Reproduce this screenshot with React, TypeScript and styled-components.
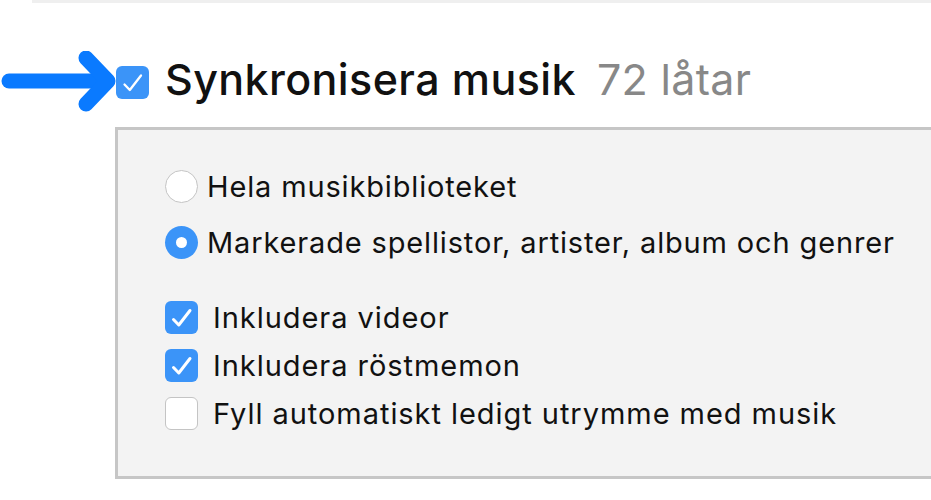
import React from 'react';
import styled, { createGlobalStyle } from 'styled-components';

const GlobalStyle = createGlobalStyle`
  html, body {
    margin: 0;
    padding: 0;
    background: #ffffff;
    font-family: Inter, "Liberation Sans", Arial, sans-serif;
    overflow: hidden;
  }
`;

const CheckMark: React.FC<{ weight: number }> = ({ weight }) => (
  <svg width="33" height="33" viewBox="0 0 33 33" fill="none">
    <path
      d="M8.5 18.5 L13.8 24 L25 9.5"
      stroke="#ffffff"
      strokeWidth={weight}
      strokeLinecap="round"
      strokeLinejoin="round"
    />
  </svg>
);

const Arrow: React.FC = () => (
  <svg width="116" height="62" viewBox="0 0 116 62" fill="none">
    <path d="M9 30 H106" stroke="#0a7aff" strokeWidth="15" strokeLinecap="round" />
    <path
      d="M86 7 L108 30 L86 53"
      stroke="#0a7aff"
      strokeWidth="15"
      strokeLinecap="round"
      strokeLinejoin="round"
    />
  </svg>
);

const App: React.FC = () => {
  return (
    <>
      <GlobalStyle />
      <Page>
        <TopRule />
        <TitleRow>
          <ArrowSlot>
            <Arrow />
          </ArrowSlot>
          <Box $checked>
            <CheckMark weight={2.3} />
          </Box>
          <Title>Synkronisera musik</Title>
          <Count>72 låtar</Count>
        </TitleRow>
        <Panel>
          <RadioGroup>
            <Option>
              <Radio />
              <Label>Hela musikbiblioteket</Label>
            </Option>
            <Option>
              <Radio $selected />
              <Label>Markerade spellistor, artister, album och genrer</Label>
            </Option>
          </RadioGroup>
          <CheckGroup>
            <Option>
              <Box $checked>
                <CheckMark weight={3} />
              </Box>
              <CheckLabel>Inkludera videor</CheckLabel>
            </Option>
            <Option>
              <Box $checked>
                <CheckMark weight={3} />
              </Box>
              <CheckLabel>Inkludera röstmemon</CheckLabel>
            </Option>
            <Option>
              <Box />
              <CheckLabel>Fyll automatiskt ledigt utrymme med musik</CheckLabel>
            </Option>
          </CheckGroup>
        </Panel>
      </Page>
    </>
  );
};

const Page = styled.div`
  width: 931px;
  height: 500px;
  display: flex;
  flex-direction: column;
`;

const TopRule = styled.div`
  margin-left: 32px;
  height: 3px;
  background: #efefef;
`;

const TitleRow = styled.div`
  display: flex;
  align-items: center;
  margin-top: 48px;
  height: 62px;
`;

const ArrowSlot = styled.div`
  width: 116px;
  height: 62px;
  flex-shrink: 0;
`;

const Box = styled.div<{ $checked?: boolean }>`
  width: 33px;
  height: 33px;
  box-sizing: border-box;
  border-radius: 6px;
  flex-shrink: 0;
  display: flex;
  align-items: center;
  justify-content: center;
  background: ${(p) => (p.$checked ? '#3b94f8' : '#ffffff')};
  border: ${(p) => (p.$checked ? 'none' : '1.5px solid #c4c4c4')};
`;

const Title = styled.span`
  margin-left: 16px;
  margin-bottom: 6px;
  font-size: 43px;
  font-weight: 500;
  color: #111111;
  letter-spacing: 0.4px;
`;

const Count = styled.span`
  margin-left: 21px;
  margin-bottom: 6px;
  font-size: 43px;
  font-weight: 400;
  color: #888888;
  letter-spacing: 0.3px;
`;

const Panel = styled.div`
  margin-top: 14px;
  margin-left: 115px;
  height: 352px;
  box-sizing: border-box;
  background: #f3f3f3;
  border: 3px solid #c6c6c6;
  border-right: none;
  padding: 40px 0 0 47px;
  display: flex;
  flex-direction: column;
  gap: 42px;
`;

const RadioGroup = styled.div`
  display: flex;
  flex-direction: column;
  gap: 23px;
`;

const CheckGroup = styled.div`
  display: flex;
  flex-direction: column;
  gap: 15px;
`;

const Option = styled.div`
  display: flex;
  align-items: center;
  height: 33px;
`;

const Radio = styled.div<{ $selected?: boolean }>`
  width: 33px;
  height: 33px;
  box-sizing: border-box;
  border-radius: 50%;
  flex-shrink: 0;
  display: flex;
  align-items: center;
  justify-content: center;
  background: ${(p) => (p.$selected ? '#3b94f8' : '#ffffff')};
  border: ${(p) => (p.$selected ? 'none' : '1.5px solid #c4c4c4')};

  &::after {
    content: '';
    display: ${(p) => (p.$selected ? 'block' : 'none')};
    width: 11px;
    height: 11px;
    border-radius: 50%;
    background: #ffffff;
  }
`;

const Label = styled.span`
  margin-left: 9px;
  font-size: 29px;
  color: #111111;
  letter-spacing: 0.85px;
`;

const CheckLabel = styled(Label)`
  margin-left: 15px;
  letter-spacing: 0.95px;
`;

export default App;
